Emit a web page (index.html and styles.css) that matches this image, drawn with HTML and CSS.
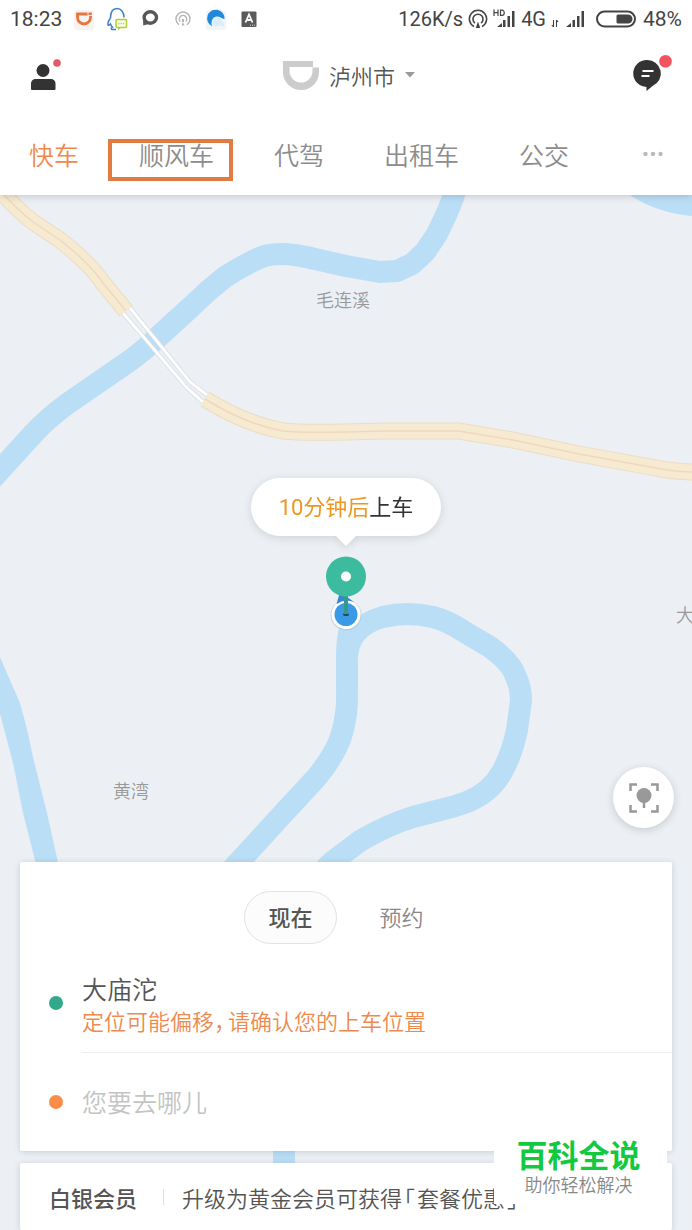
FILE: index.html
```html
<!DOCTYPE html>
<html lang="zh-CN">
<head>
<meta charset="utf-8">
<meta name="viewport" content="width=device-width, initial-scale=1">
<title>快车</title>
<link rel="stylesheet" href="styles.css">
</head>
<body>
<div class="app">
  <header class="header">
    <div class="status">
      <span class="big">18:23</span>
      <div class="notices">
        <svg viewBox="0 0 24 24"><rect x="2" y="3" width="20" height="20" rx="3" fill="#f6f4f3"/><path d="M5.500 7H18.500V10.500A6.500 6.500 0 0 1 5.500 10.500Z" fill="none" stroke="#e8763f" stroke-width="2.800"/><path d="M16 5v3.500H20.500" fill="none" stroke="#fff" stroke-width=".8"/></svg>
        <svg viewBox="0 0 24 24"><path d="M5.500 11C5.500 5 8 1.500 12 1.500S19 5 19 10.500M5.500 11C4 13 2.500 15.500 3 18c1 .5 2-.5 2.500-1 .5 1.500 1 2.500 2 3.200-2 1-1.500 2.300.5 2.300h3" fill="none" stroke="#3e7cc9" stroke-width="1.500"/><rect x="11" y="12.500" width="10.500" height="8" rx="1" fill="#fbfde9" stroke="#a9d12f" stroke-width="1.500"/><path d="M13 20.500v2.500l3-2.500" fill="#a9d12f"/><path d="M13.300 16.500h6" stroke="#a9d12f" stroke-width="1.500" stroke-dasharray="1.200 1.100"/></svg>
        <svg viewBox="0 0 24 24"><ellipse cx="12.300" cy="10.500" rx="6.200" ry="5.700" fill="none" stroke="#585858" stroke-width="3.400"/><path d="M5 13 5.300 18.500 10.500 17Z" fill="#585858"/></svg>
        <svg viewBox="0 0 24 24" fill="none" stroke="#b5b5b5" stroke-width="1.400"><path d="M8 17.700A7 7 0 1 1 16 17.700M9.300 14.600A3.700 3.700 0 1 1 14.700 14.600"/><path d="M12 12v3" stroke-width="2"/><path d="M10.500 18.500 12 15l1.500 3.500Z" fill="#b5b5b5" stroke="none"/></svg>
        <svg viewBox="0 0 24 24"><rect x="2" y="3" width="20" height="20" rx="3" fill="#f1f5f8"/><path d="M20.500 12A8.700 8.700 0 1 0 8 19.200C6.500 14 9 9.500 13 9.500c3 0 4.500 2 7.500 2.500Z" fill="#2089dc"/><path d="M14 10c-4 0-6.500 4-5 8.500 2 1.500 5 .8 6-1 2 2 5 2 5.500 1-1-1-2-6-6.500-8.500Z" fill="#d9edfa"/></svg>
        <svg viewBox="0 0 24 24"><rect x="4.500" y="4.500" width="15" height="15.500" rx="1" fill="#5b5b5b"/><path d="M8.500 15.500 12 7.500l3.500 8M9.700 13h4.600" fill="none" stroke="#fff" stroke-width="1.800"/><path d="M13 18.200h5" stroke="#ddd" stroke-dasharray="1 1"/></svg>
      </div>
      <div class="radio">
        <span>126K/s</span>
        <svg class="ic-cast" viewBox="0 0 20 20" fill="none" stroke="#444" stroke-width="1.600"><path d="M6 17.500A8.600 8.600 0 1 1 14 17.500M7 14.200A5 5 0 1 1 13 14.200"/><path d="M7.800 19 10 12.500 12.200 19Z" fill="#444" stroke="none"/></svg>
        <svg class="ic-sig" viewBox="0 0 23 20"><path d="M1 .5v6.500M5 .5v6.500M1 3.700h4M7.500 1.200v5.200h1.500c3 0 3-5.200 0-5.200Z" fill="none" stroke="#444" stroke-width="1.200"/><path d="M4 18h5v-4ZM10 18v-7h2.500v7ZM14.500 18V7H17v11ZM19 18V2H21.500v16Z" fill="#444"/></svg>
        <span>4G</span>
        <svg class="ic-arrows" viewBox="0 0 8 20"><path d="M2.500 11v7M.8 16l1.700 2M5.500 18v-7M7.200 13 5.500 11" fill="none" stroke="#444" stroke-width="1.100"/></svg>
        <svg class="ic-sig" viewBox="0 0 23 20"><path d="M2 18h5v-4ZM8.500 18v-7H11v7ZM13 18V7h2.500v11ZM17.500 18V2H20v16Z" fill="#444"/></svg>
        <svg class="ic-batt" viewBox="0 0 40 18"><rect x="1" y="1.500" width="38" height="15" rx="7.500" fill="none" stroke="#444" stroke-width="2"/><path d="M22 4.500h10a4.500 4.500 0 0 1 0 9h-10a1.500 1.500 0 0 1-1.500-1.500V6A1.500 1.500 0 0 1 22 4.500Z" fill="#444"/></svg>
        <span class="big">48%</span>
      </div>
    </div>
    <div class="titlebar">
      <button aria-label="个人中心">
        <svg class="ic-user" viewBox="0 0 36 32"><circle cx="14" cy="11.500" r="6.500" fill="#333"/><path d="M2 30v-5c0-3.500 2-5 5-5h14.500c3 0 5 1.500 5 5v5q0 1-1 1H3q-1 0-1-1Z" fill="#333"/><circle cx="28" cy="4" r="3.800" fill="#e05a68"/></svg>
      </button>
      <button class="city">
        <svg class="ic-logo" viewBox="0 0 36 30"><path d="M0 1H30V7H6.500v4a11.500 11.500 0 0 0 23 0V7.500H36V12a18 18 0 0 1-36 0Z" fill="#ccc"/></svg>
        <span>泸州市</span>
        <svg class="ic-caret" viewBox="0 0 10 6"><path d="M0 0H10L5 5.500Z" fill="#999"/></svg>
      </button>
      <button aria-label="消息">
        <svg class="ic-msg" viewBox="0 0 40 40"><path d="M14 5A13.500 13.500 0 0 1 19.500 31L13.500 36v-4A13.500 13.500 0 0 1 14 5Z" fill="#333"/><path d="M9.500 16h11M8.500 21h8" stroke="#fff" stroke-width="2"/><circle cx="32.500" cy="6.300" r="6.300" fill="#f4525e"/></svg>
      </button>
    </div>
    <nav class="tabs">
      <a class="tab tab-active" href="#">快车</a>
      <a class="tab tab-marked" href="#">顺风车</a>
      <a class="tab" href="#">代驾</a>
      <a class="tab" href="#">出租车</a>
      <a class="tab" href="#">公交</a>
      <button class="more" aria-label="更多">
        <svg viewBox="0 0 20 6" fill="#bbb"><circle cx="2.500" cy="3" r="2.200"/><circle cx="10" cy="3" r="2.200"/><circle cx="17.500" cy="3" r="2.200"/></svg>
      </button>
    </nav>
  </header>

  <main class="main">
    <svg class="map" viewBox="0 195 692 1035" preserveAspectRatio="xMidYMin slice">
      <g fill="none" stroke="#bbdef7" stroke-width="22" stroke-linejoin="round">
        <path d="M456 188 453 198 447 213 437 234 425 252 412 264 397 271 380 272 346 266 315 259 Q280 250 262 257 Q245 264 225 277 Q208 290 192 306 L158 337 Q145 350 128 362 L67 404 Q48 418 33 434 L-8 479"/>
        <path d="M352 622Q347 636 347 657L347 690Q348 712 342 733Q337 752 317 777L280 817 225 877"/>
        <path d="M347 660Q347 627 383 617Q407 611 433 617Q448 621 463 631L490 647 Q512 663 516 677 Q521 688 521 700L517 730Q512 754 502 772Q490 793 467 802Q454 807 440 810L413 817Q387 825 360 841L332 862 310 884"/>
        <path d="M284 1130V1190"/>
      </g>
      <g fill="#bbdef7">
        <path d="M-1 655 20 703Q28 730 33 757L47 813 62 880H40L23 813 13 763-1 710Z"/>
        <path d="M627 193Q655 213 693 216V193Z"/>
      </g>
      <g fill="none">
        <g stroke="#d6dce0" stroke-width="4.500"><path d="M123 313 187 388 203 402"/><path d="M130 308 190 382 207 395"/></g>
        <g stroke="#fff" stroke-width="3"><path d="M123 313 187 388 203 402"/><path d="M130 308 190 382 207 395"/></g>
        <g stroke="#eddcc0" stroke-width="17"><path d="M-2 189 17 208Q24 215 33 222L60 240Q74 251 83 260 93 269 103 283L126 311"/><path d="M205 399Q245 424 283 431 300 433 346 432L386 431H459L513 440 579 454 656 468Q674 472 698 472"/></g>
        <g stroke="#f7ead2" stroke-width="15"><path d="M-2 189 17 208Q24 215 33 222L60 240Q74 251 83 260 93 269 103 283L126 311"/><path d="M205 399Q245 424 283 431 300 433 346 432L386 431H459L513 440 579 454 656 468Q674 472 698 472"/></g>
        <g stroke="#efd9b9" stroke-width="1.500"><path d="M-2 189 17 208Q24 215 33 222L60 240Q74 251 83 260 93 269 103 283L126 311"/><path d="M205 399Q245 424 283 431 300 433 346 432L386 431H459L513 440 579 454 656 468Q674 472 698 472"/></g>
      </g>
      <g class="place">
        <text x="316" y="307">毛连溪</text>
        <text x="113" y="798">黄湾</text>
        <text x="676" y="622">大</text>
      </g>
    </svg>

    <button class="bubble"><span class="wait">10分钟后</span>上车</button>
    <svg class="pin" viewBox="0 0 44 76">
      <circle cx="22" cy="59" r="15.500" fill="#b9c3cc" opacity=".6"/>
      <circle cx="22" cy="58.500" r="14.500" fill="#fff"/>
      <path d="M12.500 48 16 36 30 46Q21 42 12.500 48Z" fill="#3a85cf"/>
      <circle cx="22" cy="58.500" r="11.500" fill="#3b9ae6"/>
      <ellipse cx="22" cy="58.500" rx="3" ry="1.500" fill="#1d4f66"/>
      <path d="M22 38V58" stroke="#359a86" stroke-width="4"/>
      <circle cx="22" cy="20.500" r="20" fill="#3dbb9f"/>
      <circle cx="22" cy="20.500" r="5" fill="#fff"/>
    </svg>

    <button class="locate" aria-label="定位">
      <svg viewBox="0 0 30 30"><path d="M1.500 8V1.500H8M22 1.500h6.500V8M28.500 22v6.500H22M8 28.500H1.500V22" fill="none" stroke="#999" stroke-width="2.500"/><circle cx="15" cy="12.500" r="7.500" fill="#999"/><path d="M15 18v7" stroke="#999" stroke-width="2.500"/></svg>
    </button>

    <section class="sheet">
      <div class="card">
        <div class="when">
          <button class="when-btn when-on">现在</button>
          <button class="when-btn">预约</button>
        </div>
        <div class="row row-from">
          <i class="dot dot-from"></i>
          <button class="from">
            <span class="from-name">大庙沱</span>
            <span class="from-tip">定位可能偏移<span class="comma">，</span>请确认您的上车位置</span>
          </button>
        </div>
        <div class="row">
          <i class="dot dot-to"></i>
          <input class="to" type="text" placeholder="您要去哪儿" aria-label="您要去哪儿">
        </div>
      </div>
      <a class="card member" href="#">
        <strong class="level">白银会员</strong>
        <span class="upgrade">升级为黄金会员可获得<span class="quote">「</span>套餐优惠<span class="quote">」</span></span>
      </a>
    </section>
    <div class="brand">
      <strong class="brand-name">百科全说</strong>
      <span class="brand-tag">助你轻松解决</span>
    </div>
  </main>
</div>
</body>
</html>
```
FILE: styles.css
```css
* { box-sizing: border-box; }

body {
  margin: 0;
  font-family: "Noto Sans CJK SC", sans-serif;
  font-weight: 350;
  color: #555;
}

button, input {
  margin: 0;
  padding: 0;
  border: 0;
  background: none;
  font: inherit;
  color: inherit;
  text-align: left;
}

a { color: inherit; text-decoration: none; }
svg { display: block; flex: none; }

.app {
  min-height: 100vh;
  display: flex;
  flex-direction: column;
}

.header {
  position: relative;
  z-index: 1;
  background: #fff;
  box-shadow: 0 1px 8px rgba(0, 0, 0, .18);
}

.status {
  height: 37px;
  padding: 0 10px;
  display: flex;
  align-items: center;
  gap: 10px;
  font-family: Roboto, sans-serif;
  font-size: 20px;
  font-weight: 400;
  color: #444;
}
.big { font-size: 21px; }
.notices { display: flex; gap: 9px; }
.notices svg { width: 24px; height: 24px; }
.radio {
  margin-left: auto;
  display: flex;
  align-items: center;
  gap: 5px;
}
.ic-cast { width: 20px; height: 20px; }
.ic-sig { width: 23px; height: 20px; }
.ic-arrows { width: 8px; height: 20px; }
.ic-batt { width: 40px; height: 18px; margin: 0 2px 0 4px; }

.titlebar {
  height: 80px;
  padding: 0 19px 4px 29px;
  display: flex;
  align-items: center;
  justify-content: space-between;
}
.ic-user { width: 36px; height: 32px; }
.ic-msg { width: 40px; height: 42px; }
.city {
  display: flex;
  align-items: center;
  gap: 10px;
  font-size: 22px;
}
.ic-logo { width: 36px; height: 30px; }
.ic-caret { width: 10px; height: 6px; }

.tabs {
  height: 78px;
  padding: 0 29px 4px;
  display: flex;
  align-items: center;
  gap: 60px;
  font-size: 25px;
  color: #8c8c8c;
}
.tab { position: relative; line-height: 36px; white-space: nowrap; }
.tab-active { color: #f08a4b; }
.tab-marked::after {
  content: "";
  position: absolute;
  inset: 3px -19px -9px -31px;
  border: 4px solid #e07b42;
}
.more { margin-left: auto; }
.more svg { width: 20px; height: 6px; }

.main {
  position: relative;
  flex: 1;
  display: flex;
  flex-direction: column;
  overflow: hidden;
  background: #ecf0f5;
}
.map {
  position: absolute;
  inset: 0;
  width: 100%;
  height: 100%;
}
.place { font-size: 18px; fill: #999; }

.bubble {
  position: relative;
  align-self: center;
  margin-top: 283px;
  padding: 1px 28px 0;
  line-height: 57px;
  border-radius: 29px;
  background: #fff;
  font-family: Roboto, "Noto Sans CJK SC", sans-serif;
  font-size: 22px;
  font-weight: 400;
  color: #333;
  filter: drop-shadow(0 2px 4px rgba(0, 0, 0, .12));
}
.bubble::after {
  content: "";
  position: absolute;
  top: 100%;
  left: 50%;
  margin-left: -10px;
  border: 10px solid transparent;
  border-top-color: #fff;
  border-bottom: 0;
}
.wait { color: #ee971f; }
.pin {
  position: relative;
  align-self: center;
  width: 44px;
  height: 76px;
  margin-top: 20px;
}

.locate {
  position: relative;
  align-self: flex-end;
  display: flex;
  align-items: center;
  justify-content: center;
  width: 61px;
  height: 61px;
  margin: auto 18px 34px;
  border-radius: 50%;
  background: #fff;
  box-shadow: 0 2px 8px rgba(0, 0, 0, .16);
}
.locate svg { width: 30px; height: 30px; }

.sheet {
  position: relative;
  display: flex;
  flex-direction: column;
  gap: 12px;
  padding: 0 20px;
}
.card {
  border-radius: 2px;
  background: #fff;
  box-shadow: 0 1px 6px rgba(60, 70, 90, .2);
}

.when {
  display: flex;
  justify-content: center;
  gap: 18px;
  padding-top: 29px;
}
.when-btn {
  width: 93px;
  height: 53px;
  padding-bottom: 4px;
  border-radius: 27px;
  font-size: 22px;
  text-align: center;
  color: #888;
}
.when-on {
  border: 1px solid #e2e2e2;
  background: #fcfcfc;
  font-weight: 500;
  color: #555;
}

.row {
  display: flex;
  align-items: center;
  gap: 19px;
  padding-left: 29px;
}
.row-from { padding-top: 8px; }
.dot { flex: none; width: 14px; height: 14px; border-radius: 50%; }
.dot-from { background: #33a88a; }
.dot-to { background: #fa8c4c; }
.from {
  flex: 1;
  display: flex;
  flex-direction: column;
  padding: 21px 0 16px;
  border-bottom: 1px solid #eee;
}
.from-name { font-size: 25px; line-height: 31px; }
.from-tip { font-size: 22px; line-height: 32px; color: #ee8a4e; }
.comma, .quote { font-feature-settings: "halt"; }
.comma { margin-right: 3px; }
.quote { margin: 0 2px; }
.to {
  flex: 1;
  min-width: 0;
  height: 98px;
  padding-bottom: 3px;
  font-size: 25px;
}
.to::placeholder { color: #c4c4c4; opacity: 1; }

.member {
  display: flex;
  align-items: center;
  overflow: hidden;
  padding: 18px 0 17px 29px;
  font-size: 22px;
  line-height: 32px;
  white-space: nowrap;
}
.level { font-weight: 500; }
.upgrade {
  display: flex;
  align-items: center;
  margin-left: 26px;
}
.upgrade::before {
  content: "";
  width: 1px;
  height: 16px;
  margin-right: 18px;
  background: #ddd;
}

.brand {
  position: absolute;
  right: 25px;
  bottom: 26px;
  width: 173px;
  padding: 0 4px 6px 0;
  display: flex;
  flex-direction: column;
  align-items: center;
  background: #fff;
}
.brand-name { font-size: 31px; line-height: 32px; font-weight: 700; color: #13c93f; }
.brand-tag { font-size: 18px; line-height: 28px; color: #888; }
```
